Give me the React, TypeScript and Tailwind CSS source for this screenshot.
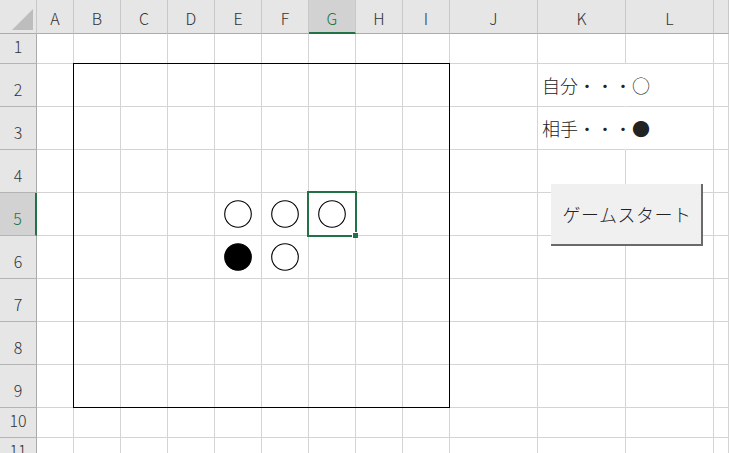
import React from 'react';

const COLS = ['A', 'B', 'C', 'D', 'E', 'F', 'G', 'H', 'I', 'J', 'K', 'L', ''];
const ROWS = [1, 2, 3, 4, 5, 6, 7, 8, 9, 10, 11];

const GRID =
  'grid grid-cols-[37px_37px_repeat(8,47px)_88px_88px_88px_1fr] grid-rows-[34px_30px_repeat(8,43px)_30px_30px]';

// 盤面の石
const stones: Record<string, 'white' | 'black'> = {
  E5: 'white',
  F5: 'white',
  G5: 'white',
  E6: 'black',
  F6: 'white',
};

const legend: Record<string, string> = {
  K2: '自分・・・○',
  K3: '相手・・・●',
};

const Stone: React.FC<{ color: 'white' | 'black' }> = ({ color }) => (
  <svg width="28" height="28" viewBox="0 0 28 28">
    <circle cx="14" cy="14" r="13.3" fill={color} stroke="black" strokeWidth="1.1" />
  </svg>
);

const Cell: React.FC<{ id: string }> = ({ id }) => {
  const stone = stones[id];
  const text = legend[id];

  if (text) {
    return (
      <div className="flex items-center whitespace-nowrap border-b border-r border-b-[#d4d4d4] border-r-white pl-[4px] text-[18px] font-light text-[#222]">
        {text}
      </div>
    );
  }

  return (
    <div className="flex items-center justify-center border-b border-r border-[#d4d4d4] pr-px">
      {stone && <Stone color={stone} />}
    </div>
  );
};

export default function App() {
  return (
    <div className="relative h-[453px] w-[729px] overflow-hidden bg-white font-['Noto_Sans_CJK_JP',sans-serif]">
      <div className={GRID}>
        {/* corner */}
        <div className="flex items-end justify-end border-b border-r border-b-[#ababab] border-r-[#c8c8c8] bg-[#e6e6e6] pb-[3px] pr-[3px]">
          <svg width="21" height="21" viewBox="0 0 21 21">
            <polygon points="0,21 21,21 21,0" fill="#bdbdbd" />
          </svg>
        </div>

        {COLS.map((c, i) =>
          c === 'G' ? (
            <div
              key={i}
              className="flex items-center justify-center border-b-2 border-r border-b-[#217346] border-r-[#c8c8c8] bg-[#d2d2d2] pt-[3px] text-[16px] font-light text-[#217346]"
            >
              {c}
            </div>
          ) : (
            <div
              key={i}
              className="flex items-center justify-center border-b border-r border-b-[#ababab] border-r-[#c8c8c8] bg-[#e6e6e6] pt-[3px] text-[16px] font-light text-[#333]"
            >
              {c}
            </div>
          )
        )}

        {ROWS.map((r) => (
          <React.Fragment key={r}>
            {r === 5 ? (
              <div className="flex items-end justify-center border-b border-r-2 border-b-[#b4b4b4] border-r-[#217346] bg-[#d2d2d2] pb-[5px] text-[16px] font-light text-[#217346]">
                {r}
              </div>
            ) : (
              <div className="flex items-end justify-center border-b border-r border-b-[#b4b4b4] border-r-[#ababab] bg-[#e6e6e6] pb-[5px] text-[16px] font-light text-[#333]">
                {r}
              </div>
            )}
            {COLS.map((c, i) => (
              <Cell key={i} id={`${c}${r}`} />
            ))}
          </React.Fragment>
        ))}
      </div>

      {/* overlays: board frame and selection */}
      <div className={`pointer-events-none absolute inset-0 ${GRID}`}>
        <div className="col-start-3 col-end-11 row-start-3 row-end-11 -ml-px -mt-px border border-black" />
        <div className="relative col-start-8 row-start-6 -mb-px -ml-[2px] -mr-px -mt-[2px] border-2 border-[#217346]">
          <div className="absolute -bottom-[3px] -right-[3px] h-[6px] w-[6px] border-l border-t border-white bg-[#217346]" />
        </div>
      </div>

      <button className="absolute left-[551px] top-[184px] flex h-[62px] w-[152px] items-center justify-center border-b-2 border-r-2 border-b-[#6a6a6a] border-r-[#6a6a6a] bg-[#f0f0f0] pl-[2px] text-[18px] font-light tracking-[0.5px] text-[#222]">
        ゲームスタート
      </button>
    </div>
  );
}
